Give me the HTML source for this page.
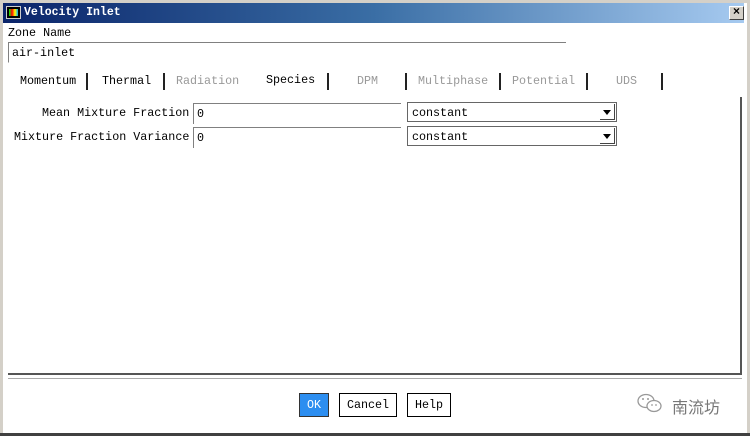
<!DOCTYPE html>
<html><head><meta charset="utf-8"><style>
*{margin:0;padding:0;box-sizing:border-box}
body{width:750px;height:436px;overflow:hidden;background:#d4d0c8;position:relative;font-family:"Liberation Mono",monospace;font-size:11.7px;color:#000}
.a{position:absolute;white-space:nowrap}
.g{color:#999}
.bar{position:absolute;width:2px;height:17px;background:#222;top:73px}
.inp{position:absolute;height:21px;border-top:1px solid #808080;border-left:1px solid #808080;background:#fff;padding:3px 0 0 3px}
.sel{position:absolute;height:20px;border:1px solid #666;background:#fff;padding:3px 0 0 4px}
.sel .ar{position:absolute;right:1px;top:1px;width:15px;height:16px;border-right:1px solid #444;border-bottom:1px solid #444}
.sel .ar:after{content:"";position:absolute;left:3px;top:6px;border-left:4px solid transparent;border-right:4px solid transparent;border-top:5px solid #000}
.btn{position:absolute;top:393px;height:24px;border:1px solid #000;background:#fff;text-align:center;line-height:22px}
</style></head><body>
<div class="a" style="left:3px;top:3px;width:744px;height:430px;background:#fff"></div>
<div class="a" style="left:0;top:433px;width:750px;height:3px;background:#404040"></div>
<div class="a" style="left:3px;top:3px;width:741px;height:20px;background:linear-gradient(90deg,#0a246a 0%,#3a6ea5 50%,#a6caf0 100%)"></div>
<div class="a" style="left:6px;top:6px;width:15px;height:13px;background:#000;border:1px solid #ccc"><div style="position:absolute;left:2px;top:2px;width:9px;height:7px;background:linear-gradient(90deg,#0f0,#f00,#ff0,#0af)"></div></div>
<div class="a" style="left:24px;top:6px;color:#fff;font-weight:bold;font-size:11.5px">Velocity Inlet</div>
<div class="a" style="left:729px;top:6px;width:15px;height:14px;background:#d4d0c8;border:1px solid;border-color:#fff #404040 #404040 #fff;text-align:center;line-height:11px;font-size:12px;font-weight:bold">×</div>
<div class="a" style="left:8px;top:26px">Zone Name</div>
<div class="inp" style="left:8px;top:42px;width:558px;border-right:0;border-bottom:1px solid #fff">air-inlet</div>
<div class="a" style="left:20px;top:74px">Momentum</div><div class="bar" style="left:86px"></div>
<div class="a" style="left:102px;top:74px">Thermal</div><div class="bar" style="left:163px"></div>
<div class="a g" style="left:176px;top:74px">Radiation</div>
<div class="a" style="left:266px;top:73px">Species</div><div class="bar" style="left:327px"></div>
<div class="a g" style="left:357px;top:74px">DPM</div><div class="bar" style="left:405px"></div>
<div class="a g" style="left:418px;top:74px">Multiphase</div><div class="bar" style="left:499px"></div>
<div class="a g" style="left:512px;top:74px">Potential</div><div class="bar" style="left:586px"></div>
<div class="a g" style="left:616px;top:74px">UDS</div><div class="bar" style="left:661px"></div>
<div class="a" style="left:740px;top:97px;width:2px;height:278px;background:#555"></div>
<div class="a" style="left:42px;top:106px">Mean Mixture Fraction</div>
<div class="inp" style="left:193px;top:103px;width:208px">0</div>
<div class="sel" style="left:407px;top:102px;width:210px">constant<div class="ar"></div></div>
<div class="a" style="left:14px;top:130px">Mixture Fraction Variance</div>
<div class="inp" style="left:193px;top:127px;width:208px">0</div>
<div class="sel" style="left:407px;top:126px;width:210px">constant<div class="ar"></div></div>
<div class="a" style="left:8px;top:373px;width:734px;height:2px;background:#555"></div>
<div class="a" style="left:8px;top:378px;width:734px;height:1px;background:#aaa"></div>
<div class="btn" style="left:299px;width:30px;background:#2c8ef0;color:#fff;border-color:#333">OK</div>
<div class="btn" style="left:339px;width:58px">Cancel</div>
<div class="btn" style="left:407px;width:44px">Help</div>
<svg class="a" style="left:636px;top:391px" width="30" height="26" viewBox="0 0 30 26"><g fill="none" stroke="#999" stroke-width="1.3"><ellipse cx="10" cy="10" rx="8" ry="6.5"/><ellipse cx="18" cy="15" rx="7" ry="5.5" fill="#fff"/></g><g fill="#999"><circle cx="7" cy="8" r="1"/><circle cx="12" cy="8" r="1"/><circle cx="16" cy="14" r="0.9"/><circle cx="20" cy="14" r="0.9"/></g></svg>
<div class="a" style="left:672px;top:394px;color:#777;font-family:'Liberation Sans','Noto Sans CJK SC',sans-serif;font-size:16px">南流坊</div>
</body></html>
